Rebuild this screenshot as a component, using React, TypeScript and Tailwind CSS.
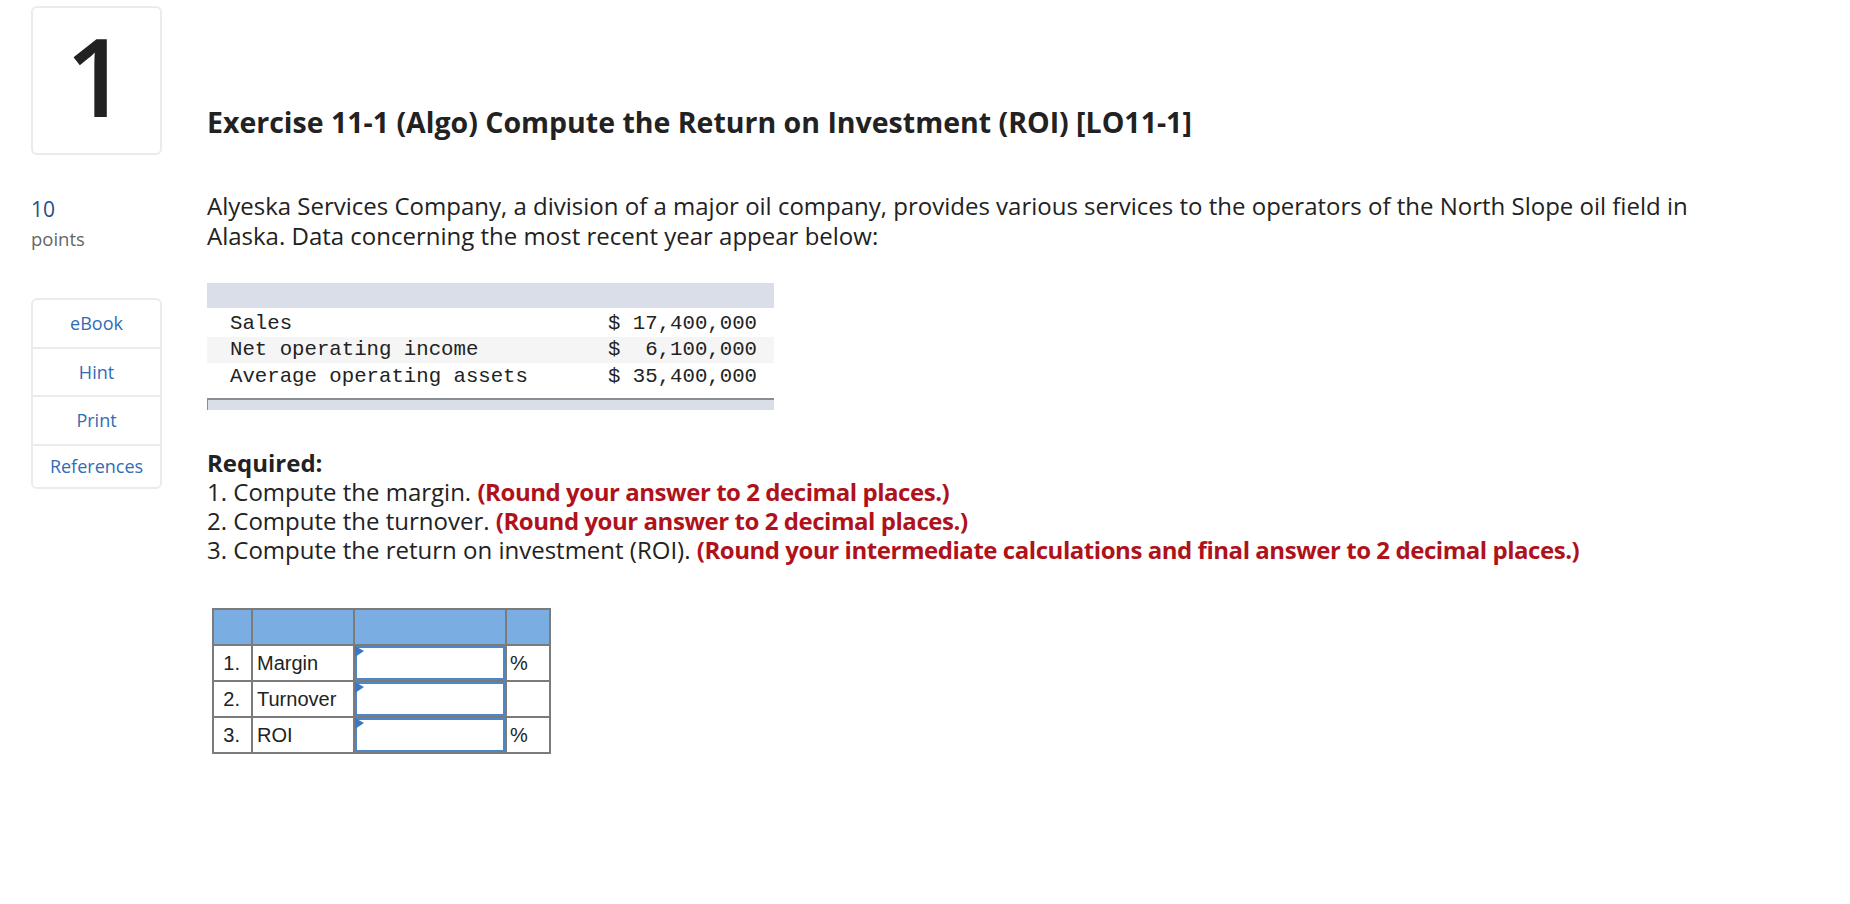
const sideLinks = [
  { name: 'eBook', h: 'h-[47px]' },
  { name: 'Hint', h: 'h-[48px]' },
  { name: 'Print', h: 'h-[49px]' },
  { name: 'References', h: 'h-[43px]' },
];

const dataRows = [
  { label: 'Sales', value: '$ 17,400,000', shade: false },
  { label: 'Net operating income', value: '$  6,100,000', shade: true },
  { label: 'Average operating assets', value: '$ 35,400,000', shade: false },
];

const answerRows = [
  { num: '1.', label: 'Margin', unit: '%' },
  { num: '2.', label: 'Turnover', unit: '' },
  { num: '3.', label: 'ROI', unit: '%' },
];

function AnswerInput() {
  return (
    <div className="relative h-full w-full border-2 border-[#4d87c7] bg-white">
      {/* small flag marker in the corner of the entry field */}
      <svg className="absolute -left-[2px] -top-[2px]" width="9" height="11" viewBox="0 0 9 11">
        <path d="M0 0 L9 5 L0 11 Z" fill="#3b78c2" />
      </svg>
      <input className="h-full w-full bg-transparent px-1 outline-none" aria-label="answer" />
    </div>
  );
}

export default function App() {
  return (
    <div className="min-h-screen bg-white font-['Open_Sans',sans-serif] text-[#222] flex pl-[31px] pt-[6px]">
      {/* Left column: question number, points, tools */}
      <aside className="w-[131px] shrink-0">
        <div className="h-[149px] border-2 border-[#ebebeb] rounded-md flex items-center justify-center">
          <span className="text-[108px] leading-none font-semibold text-[#222] mb-[9px]">1</span>
        </div>

        <div className="mt-[41px] text-[21px] leading-[26px] text-[#1f4e8c]">10</div>
        <div className="mt-[5px] text-[18.5px] leading-[24px] text-[#666]">points</div>

        <div className="mt-[47px] border-2 border-[#ebebeb] rounded-md">
          {sideLinks.map((item, i) => (
            <div
              key={item.name}
              className={`${item.h} flex items-center justify-center text-[18px] text-[#2f6db5] ${i > 0 ? 'border-t-2 border-[#ebebeb]' : ''}`}
            >
              {item.name}
            </div>
          ))}
        </div>
      </aside>

      {/* Main question content */}
      <main className="ml-[45px] flex-1">
        <h1 className="mt-[98px] text-[28.5px] leading-[36px] font-bold text-[#222]">
          Exercise 11-1 (Algo) Compute the Return on Investment (ROI) [LO11-1]
        </h1>

        <p className="mt-[51px] max-w-[1540px] text-[24px] leading-[29.5px]">
          Alyeska Services Company, a division of a major oil company, provides various services to the operators of the North Slope oil field in Alaska. Data concerning the most recent year appear below:
        </p>

        {/* Given data */}
        <div className="mt-[33px] w-[567px] font-['Liberation_Mono',monospace] text-[20.7px] text-[#222]">
          <div className="h-[25px] bg-[#d9dee8]" />
          <div className="pt-[2px]">
            {dataRows.map((row) => (
              <div
                key={row.label}
                className={`h-[26.5px] flex items-center justify-between pl-[23px] pr-[17px] ${row.shade ? 'bg-[#f5f5f5]' : ''}`}
              >
                <span>{row.label}</span>
                <span className="whitespace-pre">{row.value}</span>
              </div>
            ))}
          </div>
          <div className="mt-[8.5px] h-[12px] bg-[#d9dee8] border-t-2 border-l border-[#8a8d93]" />
        </div>

        {/* Requirements */}
        <div className="mt-[38px] text-[24px] leading-[29px]">
          <div className="font-bold">Required:</div>
          <div>
            1. Compute the margin.{' '}
            <span className="font-bold tracking-[-0.45px] text-[#b0121b]">(Round your answer to 2 decimal places.)</span>
          </div>
          <div>
            2. Compute the turnover.{' '}
            <span className="font-bold tracking-[-0.45px] text-[#b0121b]">(Round your answer to 2 decimal places.)</span>
          </div>
          <div>
            3. Compute the return on investment (ROI).{' '}
            <span className="font-bold tracking-[-0.45px] text-[#b0121b]">
              (Round your intermediate calculations and final answer to 2 decimal places.)
            </span>
          </div>
        </div>

        {/* Answer grid */}
        <div className="mt-[44px] ml-[5px] w-fit grid grid-cols-[37px_100px_150px_42px] auto-rows-[34px] gap-[2px] bg-[#7b7b7b] p-[2px] font-['Liberation_Sans',sans-serif] text-[20px] text-[#222]">
          <div className="bg-[#7aade1]" />
          <div className="bg-[#7aade1]" />
          <div className="bg-[#7aade1]" />
          <div className="bg-[#7aade1]" />
          {answerRows.map((row) => (
            <div key={row.num} className="contents">
              <div className="bg-white flex items-center justify-end pr-[11px]">{row.num}</div>
              <div className="bg-white flex items-center pl-[4px]">{row.label}</div>
              <div className="bg-white">
                <AnswerInput />
              </div>
              <div className="bg-white flex items-center pl-[3px]">{row.unit}</div>
            </div>
          ))}
        </div>
      </main>
    </div>
  );
}
